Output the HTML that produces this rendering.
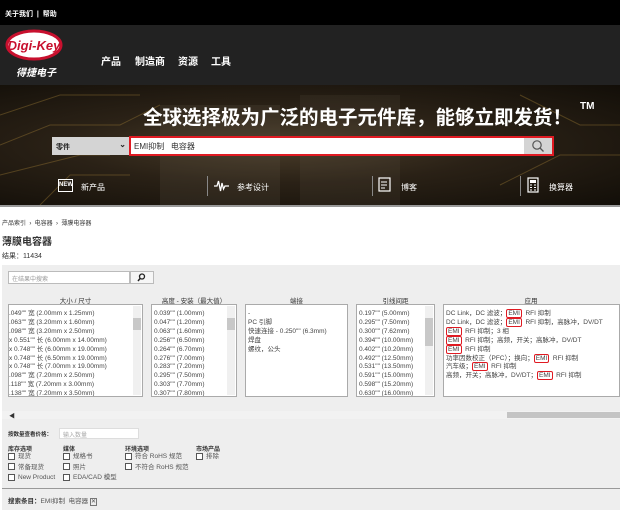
<!DOCTYPE html>
<html><head><meta charset="utf-8"><style>
*{margin:0;padding:0;box-sizing:border-box}
body{width:620px;height:509px;overflow:hidden;background:#fff;font-family:"Liberation Sans","Noto Sans CJK SC",sans-serif;color:#333;position:relative}
.a{position:absolute;white-space:nowrap}
.top{left:0;top:0;width:620px;height:25px;background:#000;color:#fff;font-size:7px;font-weight:bold;padding:9px 5px}
.hdr{left:0;top:25px;width:620px;height:60px;background:#222}
.ban{left:0;top:85px;width:620px;height:120px;background:radial-gradient(ellipse at 45% 50%,#4a3d2a 0%,#2a2116 45%,#120e08 100%)}
.nav{color:#fff;font-size:10px;font-weight:bold;top:53px}
.list{background:#fff;border:1px solid #aaa;height:93px;top:304px;font-size:6.5px;line-height:8.9px;padding:5px 2px;overflow:hidden;color:#444}
.lab{font-size:6.5px;top:295px;text-align:center;color:#333}
.sb{position:absolute;right:1px;top:1px;width:8px;height:89px;background:#f0f0f0}
.em{border:1.5px solid #e01a22;border-radius:2px;padding:0 1px}
.cb{display:inline-block;width:7px;height:7px;border:1px solid #555;background:#fff;vertical-align:middle;margin-right:3px}
.f{font-size:6.5px;color:#555}
.fh{font-size:6px;font-weight:bold;color:#333}
</style></head><body>
<div class="a top">关于我们 &nbsp;| &nbsp;帮助</div>
<div class="a hdr"></div>
<svg class="a" style="left:4px;top:29px" width="60" height="33"><ellipse cx="30" cy="16" rx="27" ry="14" fill="#fff" stroke="#c8102e" stroke-width="3"/><text x="30" y="21" text-anchor="middle" font-family="Liberation Sans" font-weight="bold" font-style="italic" font-size="13" fill="#c8102e">Digi-Key</text></svg>
<div class="a" style="left:16px;top:64px;color:#fff;font-size:10px;font-weight:bold;font-style:italic">得捷电子</div>
<div class="a nav" style="left:101px">产品</div>
<div class="a nav" style="left:135px">制造商</div>
<div class="a nav" style="left:178px">资源</div>
<div class="a nav" style="left:211px">工具</div>
<div class="a ban"></div>
<svg class="a" style="left:0;top:85px" width="620" height="120" opacity=".35"><g stroke="#b08a3a" fill="none" stroke-width="1"><path d="M0 30 L60 10 L140 10 M0 60 L50 40 L120 40 L160 20 M0 90 L80 70 L110 70 M520 10 L580 40 L620 40 M500 100 L560 70 L620 70 M40 120 L70 90 L130 90"/></g><g fill="#6a6050"><rect x="160" y="20" width="120" height="100" opacity=".5"/><rect x="300" y="10" width="100" height="110" opacity=".4"/></g></svg>
<div class="a" style="left:143px;top:101px;color:#fff;font-size:19.5px;font-weight:bold">全球选择极为广泛的电子元件库，能够立即发货！<span style="font-size:10px;vertical-align:top;margin-left:8px">TM</span></div>
<div class="a" style="left:52px;top:137px;width:77px;height:18px;background:#d4d4d4;font-size:7px;font-weight:bold;padding:5px 4px;color:#222">零件<span style="position:absolute;right:3px;top:3px;font-size:8px">⌄</span></div>
<div class="a" style="left:129px;top:136px;width:425px;height:20px;background:#fff;border:2px solid #e01a22;font-size:8px;padding:3px 3px;color:#333">EMI抑制 &nbsp; 电容器</div>
<div class="a" style="left:524px;top:138px;width:28px;height:16px;background:#d4d4d4"></div>
<svg class="a" style="left:531px;top:139px" width="14" height="14"><circle cx="6" cy="6" r="4.2" stroke="#555" stroke-width="1.2" fill="none"/><path d="M9 9 L12.5 12.5" stroke="#555" stroke-width="1.3"/></svg>
<div class="a" style="left:58px;top:179px;width:15px;height:13px;border:1px solid #fff;color:#fff;font-size:6px;font-weight:bold;text-align:center;line-height:11px">NEW</div>
<div class="a" style="left:81px;top:182px;color:#fff;font-size:8px">新产品</div>
<div class="a" style="left:207px;top:176px;width:1px;height:20px;background:#888"></div>
<svg class="a" style="left:214px;top:180px" width="15" height="12"><path d="M0 6 H3 L4.5 1 L6.5 11 L8 3 L9.5 9 L11 6 H15" stroke="#fff" stroke-width="1.3" fill="none"/></svg>
<div class="a" style="left:237px;top:182px;color:#fff;font-size:8px">参考设计</div>
<div class="a" style="left:372px;top:176px;width:1px;height:20px;background:#888"></div>
<svg class="a" style="left:378px;top:177px" width="14" height="16"><rect x="1" y="1" width="11" height="13" stroke="#fff" fill="none" stroke-width="1.2"/><path d="M3 5h6M3 8h6M3 11h4" stroke="#fff"/></svg>
<div class="a" style="left:401px;top:182px;color:#fff;font-size:8px">博客</div>
<div class="a" style="left:520px;top:176px;width:1px;height:20px;background:#888"></div>
<svg class="a" style="left:527px;top:177px" width="12" height="16"><rect x="1" y="1" width="10" height="14" stroke="#fff" fill="none" stroke-width="1.2"/><rect x="3" y="3" width="6" height="3" fill="#fff"/><path d="M3 8h2M7 8h2M3 10.5h2M7 10.5h2M3 13h2M7 13h2" stroke="#fff"/></svg>
<div class="a" style="left:549px;top:182px;color:#fff;font-size:8px">换算器</div>
<div class="a" style="left:0;top:205px;width:620px;height:2px;background:#999"></div>
<div class="a" style="left:2px;top:218px;font-size:6px">产品索引 &nbsp;› &nbsp;电容器 &nbsp;› &nbsp;薄膜电容器</div>
<div class="a" style="left:2px;top:233px;font-size:10px;font-weight:bold">薄膜电容器</div>
<div class="a" style="left:2px;top:251px;font-size:7px">结果：11434</div>
<div class="a" style="left:2px;top:265px;width:620px;height:245px;background:#eee"></div>
<div class="a" style="left:8px;top:271px;width:122px;height:13px;background:#fff;border:1px solid #bbb;font-size:6px;color:#999;padding:2px 3px">在结果中搜索</div>
<div class="a" style="left:130px;top:271px;width:24px;height:13px;background:#f6f6f6;border:1px solid #bbb"></div>
<svg class="a" style="left:137px;top:273px" width="9" height="9"><circle cx="5" cy="3.5" r="2.5" stroke="#222" stroke-width="1.3" fill="none"/><path d="M3.2 5.3 L1 8" stroke="#222" stroke-width="1.5"/></svg>
<div class="a lab" style="left:8px;width:135px">大小 / 尺寸</div>
<div class="a lab" style="left:151px;width:86px">高度 - 安装（最大值）</div>
<div class="a lab" style="left:245px;width:103px">端接</div>
<div class="a lab" style="left:356px;width:79px">引线间距</div>
<div class="a lab" style="left:443px;width:176px">应用</div>
<div class="a list" style="left:8px;width:135px;padding-left:0">.049"" 宽 (2.00mm x 1.25mm)<br>.063"" 宽 (3.20mm x 1.60mm)<br>.098"" 宽 (3.20mm x 2.50mm)<br>x 0.551"" 长 (6.00mm x 14.00mm)<br>x 0.748"" 长 (6.00mm x 19.00mm)<br>x 0.748"" 长 (6.50mm x 19.00mm)<br>x 0.748"" 长 (7.00mm x 19.00mm)<br>.098"" 宽 (7.20mm x 2.50mm)<br>.118"" 宽 (7.20mm x 3.00mm)<br>.138"" 宽 (7.20mm x 3.50mm)<div class="sb"><div style="margin-top:12px;height:12px;background:#c8c8c8"></div></div></div>
<div class="a list" style="left:151px;width:86px">0.039"" (1.00mm)<br>0.047"" (1.20mm)<br>0.063"" (1.60mm)<br>0.256"" (6.50mm)<br>0.264"" (6.70mm)<br>0.276"" (7.00mm)<br>0.283"" (7.20mm)<br>0.295"" (7.50mm)<br>0.303"" (7.70mm)<br>0.307"" (7.80mm)<div class="sb"><div style="margin-top:12px;height:12px;background:#c8c8c8"></div></div></div>
<div class="a list" style="left:245px;width:103px">-<br>PC 引脚<br>快速连接 - 0.250"" (6.3mm)<br>焊盘<br>螺纹，公头</div>
<div class="a list" style="left:356px;width:79px">0.197"" (5.00mm)<br>0.295"" (7.50mm)<br>0.300"" (7.62mm)<br>0.394"" (10.00mm)<br>0.402"" (10.20mm)<br>0.492"" (12.50mm)<br>0.531"" (13.50mm)<br>0.591"" (15.00mm)<br>0.598"" (15.20mm)<br>0.630"" (16.00mm)<div class="sb"><div style="margin-top:12px;height:28px;background:#c8c8c8"></div></div></div>
<div class="a list" style="left:443px;width:177px">DC Link，DC 滤波；<span class="em">EMI</span> &nbsp;RFI 抑制<br>DC Link，DC 滤波；<span class="em">EMI</span> &nbsp;RFI 抑制，高脉冲，DV/DT<br><span class="em">EMI</span> &nbsp;RFI 抑制；3 相<br><span class="em">EMI</span> &nbsp;RFI 抑制；高频，开关；高脉冲，DV/DT<br><span class="em">EMI</span> &nbsp;RFI 抑制<br>功率因数校正（PFC）；换向；<span class="em">EMI</span> &nbsp;RFI 抑制<br>汽车级；<span class="em">EMI</span> &nbsp;RFI 抑制<br>高频，开关；高脉冲，DV/DT；<span class="em">EMI</span> &nbsp;RFI 抑制</div>
<div class="a" style="left:2px;top:411px;width:620px;height:8px;background:#f2f2f2"></div>
<div class="a" style="left:9px;top:411px;font-size:6px;color:#333">◀</div>
<div class="a" style="left:507px;top:412px;width:115px;height:6px;background:#c4c4c4"></div>
<div class="a fh" style="left:8px;top:430px;font-size:5.5px">按数量查看价格：</div>
<div class="a" style="left:59px;top:428px;width:80px;height:11px;background:#fff;border:1px solid #ddd;font-size:6px;color:#aaa;padding:1px 3px">输入数量</div>
<div class="a fh" style="left:8px;top:444px">库存选项</div>
<div class="a fh" style="left:63px;top:444px">媒体</div>
<div class="a fh" style="left:125px;top:444px">环境选项</div>
<div class="a fh" style="left:196px;top:444px">市场产品</div>
<div class="a f" style="left:8px;top:452px;line-height:10.5px"><span class="cb"></span>现货<br><span class="cb"></span>常备现货<br><span class="cb"></span>New Product</div>
<div class="a f" style="left:63px;top:452px;line-height:10.5px"><span class="cb"></span>规格书<br><span class="cb"></span>照片<br><span class="cb"></span>EDA/CAD 模型</div>
<div class="a f" style="left:125px;top:452px;line-height:10.5px"><span class="cb"></span>符合 RoHS 规范<br><span class="cb"></span>不符合 RoHS 规范</div>
<div class="a f" style="left:196px;top:452px;line-height:10.5px"><span class="cb"></span>排除</div>
<div class="a" style="left:2px;top:488px;width:620px;height:1px;background:#999"></div>
<div class="a f" style="left:8px;top:495px"><b style="color:#333">搜索条目：</b>EMI抑制 &nbsp;电容器 <span style="font-size:6px;border:1px solid #777">✕</span></div>
</body></html>
